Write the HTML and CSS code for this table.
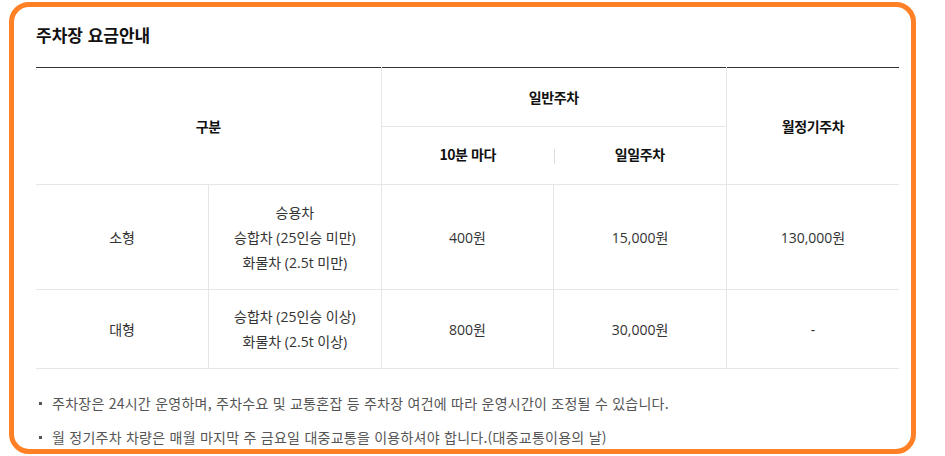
FILE: index.html
```html
<!DOCTYPE html>
<html lang="ko">
<head>
  <meta charset="UTF-8">
  <meta name="viewport" content="width=device-width, initial-scale=1.0">
  <title>주차장 요금안내</title>
  <link rel="stylesheet" href="styles.css">
</head>
<body>
  <div class="panel">
    <h2 class="title">주차장 요금안내</h2>

    <table class="fee-table">
      <colgroup>
        <col><col><col><col><col>
      </colgroup>
      <thead>
        <tr class="head-top">
          <th colspan="2" rowspan="2">구분</th>
          <th colspan="2" class="line-left">일반주차</th>
          <th rowspan="2" class="line-left">월정기주차</th>
        </tr>
        <tr class="head-sub">
          <th class="line-left">10분 마다</th>
          <th class="divided">일일주차</th>
        </tr>
      </thead>
      <tbody>
        <tr class="row-small">
          <td>소형</td>
          <td class="line-left">승용차<br>승합차 (25인승 미만)<br>화물차 (2.5t 미만)</td>
          <td class="line-left">400원</td>
          <td class="line-left">15,000원</td>
          <td class="line-left">130,000원</td>
        </tr>
        <tr class="row-large">
          <td>대형</td>
          <td class="line-left">승합차 (25인승 이상)<br>화물차 (2.5t 이상)</td>
          <td class="line-left">800원</td>
          <td class="line-left">30,000원</td>
          <td class="line-left">-</td>
        </tr>
      </tbody>
    </table>

    <ul class="notes">
      <li>주차장은 24시간 운영하며, 주차수요 및 교통혼잡 등 주차장 여건에 따라 운영시간이 조정될 수 있습니다.</li>
      <li>월 정기주차 차량은 매월 마지막 주 금요일 대중교통을 이용하셔야 합니다.(대중교통이용의 날)</li>
    </ul>
  </div>
</body>
</html>
```

FILE: styles.css
```css
/* Reset */
* {
  margin: 0;
  padding: 0;
  box-sizing: border-box;
}

body {
  margin: 2px 0 0 9px;
  background: #ffffff;
  font-family: "Open Sans", "Noto Sans CJK KR", sans-serif;
  color: #333;
}

.panel {
  width: 907px;
  height: 452px;
  border: 5px solid #ff8025;
  border-radius: 20px;
  padding: 0 0 0 22px;
  overflow: hidden;
}

.title {
  height: 60px;
  padding-top: 16px;
  font-family: "Noto Sans CJK KR", sans-serif;
  font-size: 17px;
  line-height: 24px;
  font-weight: 700;
  color: #111;
}

/* Table */
.fee-table {
  width: 863px;
  border-collapse: collapse;
  table-layout: fixed;
  border-top: 1px solid #333;
  text-align: center;
}

.fee-table th,
.fee-table td {
  border-bottom: 1px solid #e6e6e6;
  vertical-align: middle;
  padding: 0;
}

.fee-table th {
  font-family: "Noto Sans CJK KR", sans-serif;
  font-size: 14px;
  font-weight: 700;
  letter-spacing: -0.4px;
  color: #111;
}

.head-sub th {
  padding-bottom: 3px;
}

.fee-table td {
  font-size: 14px;
  line-height: 25px;
  color: #333;
}

.fee-table .line-left {
  border-left: 1px solid #e6e6e6;
}

.head-top { height: 59px; }
.head-sub { height: 58px; }
.row-small { height: 105px; }
.row-large { height: 79px; }

.divided {
  background: linear-gradient(#dcdcdc, #dcdcdc) no-repeat left 22px / 1px 15px;
}

/* Notes */
.notes {
  list-style: none;
  margin-top: 24px;
  font-family: "Noto Sans CJK KR", sans-serif;
  font-size: 14px;
  line-height: 20px;
  letter-spacing: 0.25px;
  color: #555;
}

.notes li {
  display: flex;
  align-items: center;
  margin-bottom: 14px;
}

.notes li::before {
  content: "";
  width: 3px;
  height: 3px;
  margin: 0 10px 0 3px;
  background: #555;
  flex-shrink: 0;
}
```
